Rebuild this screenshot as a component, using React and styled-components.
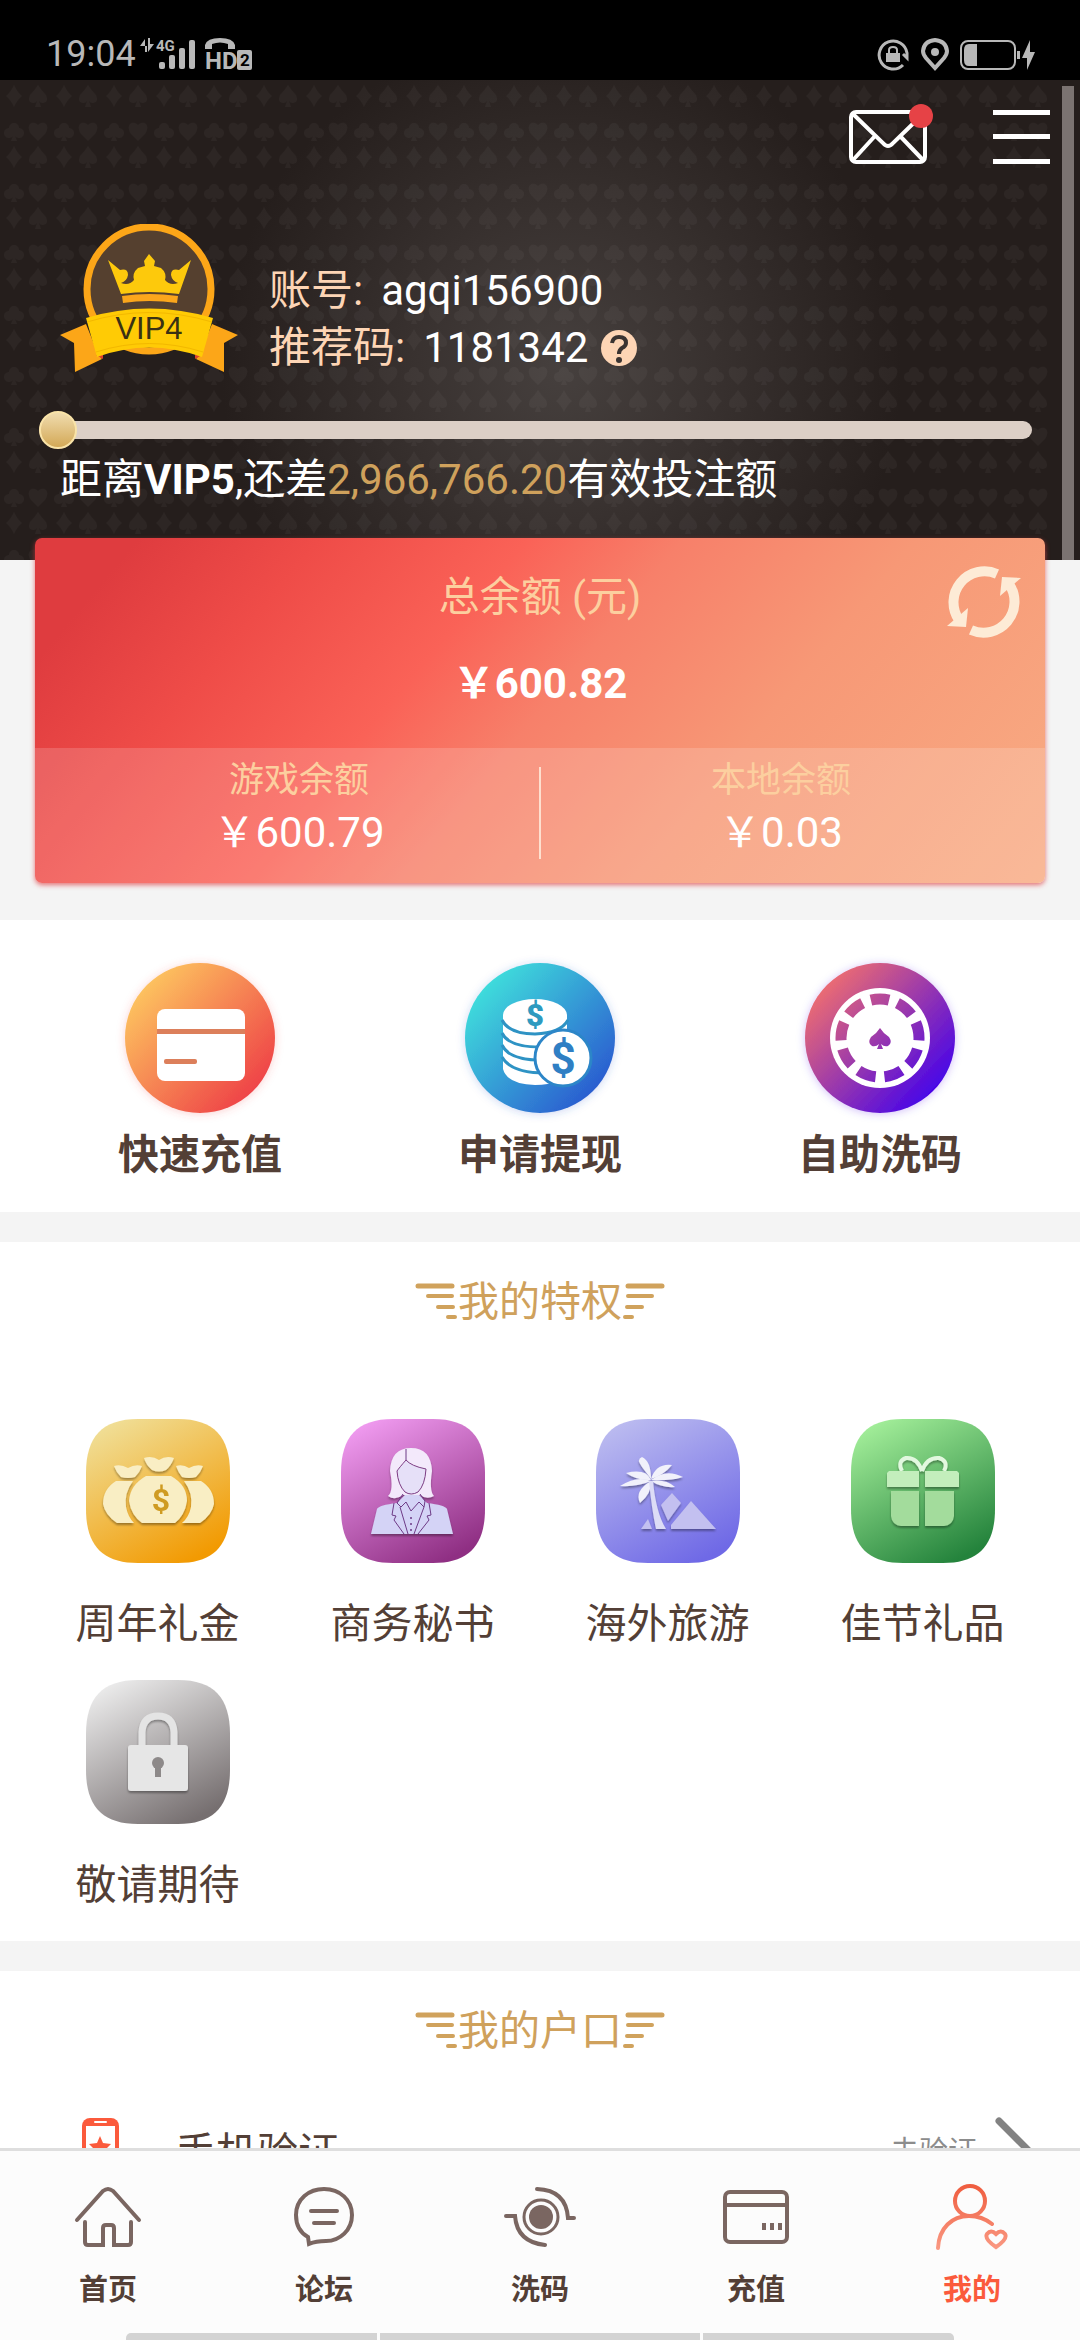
import React, { useState } from "react";
import styled, { createGlobalStyle, css } from "styled-components";

const GlobalStyle = createGlobalStyle`
  * {
    box-sizing: border-box;
  }
  body {
    margin: 0;
    background-color: #f4f4f4;
    color: #533f36;
    font-family: Roboto, "Noto Sans CJK SC", sans-serif;
  }
  button {
    padding: 0;
    border: none;
    background: none;
    color: inherit;
    font: inherit;
    cursor: pointer;
  }
  svg {
    display: block;
    flex: none;
  }
`;

const Screen = styled.div`
  display: flex;
  flex-direction: column;
  height: 100vh;
`;

/* ---------- status bar ---------- */

const StatusBar = styled.div`
  display: flex;
  flex: none;
  align-items: flex-end;
  justify-content: space-between;
  height: 80px;
  padding: 0 44px 8px 46px;
  background-color: #000;
  color: #b8b8b8;
`;

const StatusGroup = styled.div`
  display: flex;
  align-items: center;
  gap: ${(props) => props.$gap}px;
`;

const Clock = styled.span`
  font-size: 36px;
  line-height: 36px;
`;

/* ---------- header ---------- */

const Content = styled.main`
  flex: 1;
  min-height: 0;
  overflow-y: auto;
  scrollbar-width: none;
`;

const Header = styled.header`
  position: relative;
  padding: 0 30px 49px;
  background: radial-gradient(circle 340px at 52% 60%, #46403e, #38312f 45%, #251e1c);
  color: #fff;
`;

const Pattern = styled.svg`
  position: absolute;
  top: 0;
  left: 0;
  width: calc(100% - 32px);
  height: 100%;
`;

const ScrollThumb = styled.div`
  position: absolute;
  top: 6px;
  right: 6px;
  bottom: 0;
  width: 12px;
  background-color: #7b7371;
`;

const TopBar = styled.div`
  position: relative;
  display: flex;
  align-items: center;
  justify-content: flex-end;
  gap: 60px;
  height: 114px;
`;

const Profile = styled.div`
  position: relative;
  display: flex;
  align-items: flex-end;
  gap: 31px;
  margin: 30px 30px 0;
`;

const ProfileLine = styled.div`
  display: flex;
  align-items: center;
  font-size: 42px;
  line-height: 57px;
`;

const ProfileLabel = styled.span`
  margin-right: 18px;
  color: #fdd5b5;
`;

const HelpButton = styled.button`
  width: 36px;
  height: 36px;
  margin-left: 13px;
`;

const Progress = styled.div`
  position: relative;
  display: flex;
  align-items: center;
  height: 38px;
  margin: 35px 18px 0 9px;
`;

const ProgressTrack = styled.div`
  flex: 1;
  height: 18px;
  border-radius: 9px;
  background-color: #dccfc6;
`;

const ProgressKnob = styled.div`
  position: absolute;
  left: 0;
  width: 38px;
  height: 38px;
  border: 2px solid #f9e3a8;
  border-radius: 50%;
  background: linear-gradient(#f0dcae, #d3a957);
`;

const ProgressText = styled.p`
  position: relative;
  margin: 0 30px;
  font-size: 42px;
  line-height: 62px;
`;

const Amount = styled.span`
  color: #cfa15c;
`;

/* ---------- balance card ---------- */

const Card = styled.section`
  position: relative;
  overflow: hidden;
  margin: -22px 35px 37px;
  border-radius: 7px;
  background: linear-gradient(
    130deg,
    #df3c3f 8%,
    #ef4c48 22%,
    #fa6257 38%,
    #f7806a 50%,
    #f79876 68%,
    #f8ac84
  );
  box-shadow: 0 2px 5px rgba(221, 58, 62, 0.7);
  text-align: center;
`;

const CardTop = styled.div`
  display: flex;
  flex-direction: column;
  gap: 29px;
  padding: 30px 0 35px;
`;

const CardTitle = styled.h2`
  margin: 0;
  color: #fccf9f;
  font-size: 41px;
  font-weight: 400;
  line-height: 58px;
`;

const Total = styled.strong`
  color: #fff;
  font-size: 42px;
  line-height: 58px;
`;

const RefreshButton = styled.button`
  position: absolute;
  top: 27px;
  right: 24px;
`;

const CardBottom = styled.div`
  display: flex;
  align-items: flex-end;
  padding: 7px 24px 24px;
  background-color: rgba(255, 255, 255, 0.16);
`;

const Divider = styled.div`
  width: 2px;
  height: 92px;
  background-color: rgba(255, 240, 225, 0.8);
`;

const Balance = styled.div`
  flex: 1;
  color: #fff;
  font-size: 42px;
  line-height: 52px;
`;

const BalanceLabel = styled.div`
  color: #fccf9f;
  font-size: 35px;
`;

/* ---------- white panels ---------- */

const Panel = styled.section`
  margin-bottom: 30px;
  padding: ${(props) => props.$padding};
  background-color: #fff;
`;

const Grid = styled.div`
  display: grid;
  grid-template-columns: repeat(${(props) => props.$columns}, 1fr);
  row-gap: 25px;
`;

const Tile = styled.button`
  display: flex;
  flex-direction: column;
  align-items: center;
  gap: ${(props) => props.$gap}px;
  font-size: 41px;
  line-height: ${(props) => (props.$bold ? 50 : 61)}px;
  ${(props) =>
    props.$bold &&
    css`
      && {
        font-weight: 700;
      }
    `}
`;

const SectionTitle = styled.h2`
  display: flex;
  align-items: center;
  justify-content: center;
  gap: 1px;
  margin: 0 0 ${(props) => props.$space}px;
  color: #cfa15c;
  font-size: 41px;
  font-weight: 400;
  line-height: 60px;
`;

const AccountRow = styled.a`
  display: flex;
  align-items: center;
  height: 100px;
  padding: 0 18px 0 52px;
  color: inherit;
  font-size: 41px;
  text-decoration: none;
`;

const RowLabel = styled.span`
  flex: 1;
  margin-left: 56px;
`;

const RowHint = styled.span`
  margin-right: 18px;
  color: #8c8c8c;
  font-size: 29px;
`;

/* ---------- bottom navigation ---------- */

const NavBar = styled.nav`
  flex: none;
  border-top: 3px solid #dedede;
  background-color: #fcfcfc;
`;

const NavList = styled.div`
  display: grid;
  grid-template-columns: repeat(5, 1fr);
  height: 182px;
  padding-top: 33px;
`;

const NavItem = styled.a`
  display: flex;
  flex-direction: column;
  align-items: center;
  gap: 18px;
  color: ${(props) => (props.$active ? "#fb5a3c" : "#533f36")};
  font-size: 29px;
  font-weight: 700;
  line-height: 44px;
  text-decoration: none;
`;

const GestureBar = styled.div`
  display: flex;
  gap: 3px;
  height: 7px;
  margin: 0 126px;
  overflow: hidden;
  border-radius: 5px 5px 0 0;

  span {
    flex: 1;
    background-color: #d3d3d3;
  }
  span:nth-child(2) {
    flex: none;
    width: 320px;
  }
`;

/* ---------- drawings ---------- */

const SignalIcon = () => (
  <svg width="114" height="34" viewBox="0 0 114 34" fill="#b8b8b8" overflow="visible">
    <path d="M0 9 L5 2 V15 H7 V9 Z M8 1 V15 L14 7 H10 V1 Z" />
    <text x="16" y="14" fontSize="15" fontWeight="700">4G</text>
    <rect x="19" y="25" width="6" height="7" rx="2" />
    <rect x="29" y="18" width="6" height="14" rx="2" />
    <rect x="39" y="11" width="6" height="21" rx="2" />
    <rect x="49" y="3" width="6" height="29" rx="2" />
    <path d="M65 12 V8 Q67 1 80 1 Q93 1 95 8 V12 H88 V7 Q80 4 72 7 V12 Z" />
    <text x="65" y="32" fontSize="24" fontWeight="700">HD</text>
    <rect x="97" y="13" width="15" height="20" rx="2" />
    <text x="100" y="29" fontSize="17" fontWeight="700" fill="#000">2</text>
  </svg>
);

const LockRotateIcon = () => (
  <svg width="34" height="34" viewBox="0 0 34 34" fill="none" stroke="#b8b8b8">
    <path d="M27 27 A14 14 0 1 1 31 15 L31 20 L27 16" strokeWidth="3" />
    <rect x="10" y="15" width="14" height="9" fill="#b8b8b8" stroke="none" />
    <path d="M13 16 V12 Q13 9 17 9 Q21 9 21 12 V16" strokeWidth="2" />
  </svg>
);

const PinIcon = () => (
  <svg width="28" height="34" viewBox="0 0 28 34" fill="none" stroke="#b8b8b8">
    <path d="M14 30 L5 20 Q2 16 2 13 Q3 3 14 2 Q25 3 26 13 Q26 16 23 20 Z" strokeWidth="4" />
    <circle cx="14" cy="14" r="4" fill="#b8b8b8" stroke="none" />
  </svg>
);

const BatteryIcon = () => (
  <svg width="76" height="34" viewBox="0 0 76 34" fill="none">
    <rect x="1" y="3" width="54" height="28" rx="7" stroke="#b8b8b8" strokeWidth="2" />
    <path d="M17 6 V28 H9 Q4 28 4 22 V12 Q4 6 9 6 Z" fill="#b8b8b8" />
    <rect x="57" y="13" width="3" height="8" fill="#b8b8b8" />
    <path d="M70 2 L62 20 H67 V32 L75 14 H70 Z" fill="#b8b8b8" />
  </svg>
);

const SuitPattern = () => (
  <Pattern aria-hidden="true">
    <defs>
      <pattern id="suits" width="50" height="61" patternUnits="userSpaceOnUse">
        <g fill="#fff" opacity="0.035">
          <path d="M14 5 Q17 12 22 16 Q17 20 14 27 Q11 20 6 16 Q11 12 14 5 Z" />
          <path d="M38 5 Q41 10 46 15 Q49 22 43 23 Q40 23 39 21 L41 27 H35 L37 21 Q36 23 33 23 Q27 22 30 15 Q35 10 38 5 Z" />
          <path d="M11 61 L13 56 A5 5 0 1 1 9 48 A5 5 0 1 1 19 48 A5 5 0 1 1 15 56 L17 61 Z" />
          <path d="M38 45 Q42 41 46 44 Q49 48 45 54 L38 61 L31 54 Q27 48 30 44 Q34 41 38 45 Z" />
        </g>
      </pattern>
    </defs>
    <rect width="100%" height="100%" fill="url(#suits)" />
  </Pattern>
);

const MailIcon = () => (
  <svg width="84" height="68" viewBox="0 0 84 68" fill="none" stroke="#fff" strokeWidth="4">
    <rect x="2" y="9" width="74" height="50" rx="5" />
    <path d="M4 11 L34 40 Q39 46 44 40 L74 11 M4 57 L26 33 M74 57 L51 33" />
    <circle cx="72" cy="13" r="12" fill="#e64246" stroke="none" />
  </svg>
);

const MenuIcon = () => (
  <svg width="57" height="54" viewBox="0 0 57 54" fill="#fff">
    <rect y="0" width="57" height="5" />
    <rect y="24" width="57" height="5" />
    <rect y="49" width="57" height="5" />
  </svg>
);

const VipBadge = () => (
  <svg width="178" height="152" viewBox="0 0 178 152">
    <path d="M0 111 L26 100 L38 130 L42 135 L15 148 L14 119 Z" fill="#fca618" />
    <path d="M178 111 L152 100 L140 130 L136 135 L164 148 L164 119 Z" fill="#fca618" />
    <path d="M36 131 L43 131 L43 135 Z M142 131 L135 131 L135 135 Z" fill="#e0402a" />
    <circle cx="89" cy="65" r="62" fill="#55402f" stroke="#fca618" strokeWidth="7" />
    <path
      d="M48 36 L60 46 Q68 44 68 51 Q67 57 61 59 Q69 62 74 56 Q72 49 78 44 L85 42 L84 37 L89 30 L95 37 L94 42 L101 44 Q107 49 105 56 Q110 62 118 59 Q112 57 111 51 Q111 44 119 46 L131 36 L119 70 Q89 66 61 70 Z"
      fill="#fdc90c"
    />
    <path d="M62 72 Q89 68 118 72 L117 79 Q89 75 63 79 Z" fill="#fba61c" />
    <path d="M26 94 Q89 75 153 94 L142 133 Q89 114 37 133 Z" fill="#ffcb05" />
    <path d="M27 98 Q89 79 152 98 M36 128 Q89 111 143 128" fill="none" stroke="#f3b800" strokeWidth="1" />
    <text
      x="89"
      y="115"
      textAnchor="middle"
      fontFamily="Liberation Sans, sans-serif"
      fontSize="31"
      fill="#3a3113"
    >
      VIP4
    </text>
  </svg>
);

const HelpIcon = () => (
  <svg width="36" height="36" viewBox="0 0 36 36">
    <circle cx="18" cy="18" r="18" fill="#fdd5b5" />
    <path
      d="M11 13 Q12 7 18 7 Q25 7 25 13 Q25 16 21 18 Q18 20 18 24"
      fill="none"
      stroke="#3a3331"
      strokeWidth="4"
    />
    <circle cx="18" cy="30" r="3" fill="#3a3331" />
  </svg>
);

const RefreshIcon = () => (
  <svg width="74" height="74" viewBox="-1 -1 74 74">
    {[0, 180].map((angle) => (
      <g key={angle} transform={`rotate(${angle} 36 36)`}>
        <path d="M49 8 A31 31 0 0 0 11 54" fill="none" stroke="#fdebd6" strokeWidth="10" />
        <path d="M-1 60 L18 61 L20 42 Z" fill="#fdebd6" />
      </g>
    ))}
  </svg>
);

const RoundIcon = ({ id, colors, children }) => (
  <svg width="150" height="150" viewBox="0 0 150 150" overflow="visible">
    <defs>
      <linearGradient id={id} x1="10%" y1="15%" x2="85%" y2="85%">
        <stop offset="0" stopColor={colors[0]} />
        <stop offset="1" stopColor={colors[1]} />
      </linearGradient>
      <filter id={`${id}-glow`} x="-20%" y="-20%" width="140%" height="140%">
        <feDropShadow dx="0" dy="1" stdDeviation="4" floodColor={colors[1]} floodOpacity="0.25" />
      </filter>
    </defs>
    <circle cx="75" cy="75" r="75" fill={`url(#${id})`} filter={`url(#${id}-glow)`} />
    {children}
  </svg>
);

const DepositIcon = () => (
  <RoundIcon id="deposit" colors={["#fdc55f", "#ef4548"]}>
    <rect x="32" y="46" width="88" height="72" rx="8" fill="#fff" />
    <rect x="32" y="66" width="88" height="5" fill="#dc7f5b" />
    <rect x="39" y="96" width="33" height="5" rx="2" fill="#dc7f5b" />
  </RoundIcon>
);

const WithdrawIcon = () => (
  <RoundIcon id="withdraw" colors={["#3fdfdc", "#2b5fd0"]}>
    <path d="M38 52 H102 V106 Q98 122 70 122 Q42 121 38 106 Z" fill="#fff" />
    <path
      d="M37 57 Q44 71 70 71 Q96 70 103 57 M37 70 Q44 85 80 84 M37 82 Q44 97 76 97 M37 94 Q46 110 80 110"
      fill="none"
      stroke="#2e93c4"
      strokeWidth="3"
    />
    <ellipse cx="70" cy="52" rx="32" ry="16" fill="#fff" />
    <circle cx="98" cy="95" r="28" fill="#fff" stroke="#2c86c8" strokeWidth="3" />
    <text x="70" y="63" textAnchor="middle" fontSize="31" fontWeight="900" fill="#2e9abf">$</text>
    <text x="98" y="111" textAnchor="middle" fontSize="44" fontWeight="700" fill="#2f7fc4">$</text>
  </RoundIcon>
);

const ChipIcon = () => (
  <RoundIcon id="chip" colors={["#ef6e70", "#4a06e6"]}>
    <mask id="chip-mask">
      <circle cx="75" cy="75" r="50" fill="#fff" />
      <circle
        cx="75"
        cy="75"
        r="39"
        fill="none"
        stroke="#000"
        strokeWidth="11"
        pathLength="360"
        strokeDasharray="27 13"
        transform="rotate(-103.5 75 75)"
      />
      <path
        d="M75 65 Q78 70 84 74 Q88 80 83 83 Q79 84 76 81 L78 86 H72 L74 81 Q71 84 67 83 Q62 80 66 74 Q72 70 75 65 Z"
        fill="#000"
      />
    </mask>
    <rect x="25" y="25" width="100" height="100" fill="#fff" mask="url(#chip-mask)" />
  </RoundIcon>
);

const SquircleIcon = ({ id, colors, children }) => (
  <svg width="144" height="144" viewBox="0 0 144 144">
    <defs>
      <linearGradient id={id} x1="15%" y1="0" x2="70%" y2="100%">
        <stop offset="0" stopColor={colors[0]} />
        <stop offset="1" stopColor={colors[1]} />
      </linearGradient>
      <filter id={`${id}-shade`}>
        <feDropShadow dx="0" dy="2" stdDeviation="1" floodColor="#000" floodOpacity="0.35" />
      </filter>
    </defs>
    <path
      d="M52 0 H92 C128 0 144 18 144 54 V90 C144 126 128 144 92 144 H52 C16 144 0 126 0 90 V54 C0 18 16 0 52 0 Z"
      fill={`url(#${id})`}
    />
    <g filter={`url(#${id}-shade)`}>{children}</g>
  </svg>
);

const BonusIcon = () => (
  <SquircleIcon id="bonus" colors={["#f0e09a", "#f29a02"]}>
    <g fill="#f9eec4">
      <path d="M30 62 H47 Q38 74 40 88 Q42 98 48 104 H31 Q19 96 17 85 Q17 70 30 62 Z" />
      <path d="M115 62 H98 Q107 74 105 88 Q103 98 96 104 H114 Q126 96 128 85 Q128 70 115 62 Z" />
      <path d="M60 57 H85 Q101 66 101 82 Q99 96 89 104 H56 Q45 96 43 82 Q44 66 60 57 Z" />
      <path d="M28 47 Q35 45 42 49 Q49 45 56 47 Q54 53 49 58 Q42 60 35 58 Q30 53 28 47 Z" />
      <path d="M90 47 Q97 45 103 49 Q110 45 117 47 Q115 53 110 58 Q103 60 96 58 Q92 53 90 47 Z" />
      <path d="M58 39 Q66 36 73 41 Q80 36 88 39 Q85 47 80 51 Q73 54 66 51 Q60 46 58 39 Z" />
    </g>
    <text x="75" y="92" textAnchor="middle" fontSize="32" fontWeight="700" fill="#cf9b22">$</text>
  </SquircleIcon>
);

const SecretaryIcon = () => (
  <SquircleIcon id="secretary" colors={["#f29df2", "#8f2f83"]}>
    <path
      d="M47 77 Q53 72 49 52 Q50 29 70 29 Q90 29 91 52 Q88 72 93 77 Q86 81 79 76 H62 Q54 82 47 77 Z"
      fill="#f3e9fb"
    />
    <path d="M30 115 L36 90 Q38 86 56 84 L64 76 H78 L86 84 Q104 86 106 90 L112 115 Z" fill="#d4d3f6" />
    <path
      d="M65 41 Q58 49 56 52 Q57 66 64 73 Q70 77 77 73 Q84 66 85 50 Q70 47 65 41 Z"
      fill="#e6e0f8"
      stroke="#7c3c83"
      strokeWidth="1"
    />
    <path
      d="M65 30 V41 M62 75 L56 84 L60 88 L65 83 L70 92 L78 83 L83 88 L84 82 L79 75 M53 84 L51 96 L55 97 L53 101 L63 115 M59 88 L67 115 M88 84 L90 96 L86 97 L88 101 L77 115 M83 88 L73 115"
      fill="none"
      stroke="#6d3a86"
      strokeWidth="1"
    />
    <g fill="#6d3a86">
      <circle cx="70" cy="99" r="1" />
      <circle cx="70" cy="105" r="1" />
      <circle cx="70" cy="111" r="1" />
    </g>
  </SquircleIcon>
);

const TravelIcon = () => (
  <SquircleIcon id="travel" colors={["#bdbdf0", "#6f69e6"]}>
    <g fill="#f1f1fb">
      <path d="M55 62 Q41 56 24 67 Q42 68 55 62 Z" />
      <path d="M55 61 Q50 49 30 54 Q42 62 55 61 Z" />
      <path d="M55 60 Q55 42 46 38 Q40 40 46 48 Z" />
      <path d="M55 60 Q60 44 76 46 Q68 56 55 60 Z" />
      <path d="M55 61 Q70 49 87 58 Q74 62 55 61 Z" />
      <path d="M55 62 Q70 60 79 68 Q66 69 55 62 Z" />
      <path d="M55 62 Q56 74 44 84 Q38 72 55 62 Z" />
    </g>
    <path d="M53 62 Q56 92 60 110 H70 Q60 94 57 62 Z" fill="#dcdcf6" />
    <g fill="#c3c0f0">
      <path d="M76 74 L85 84 L72 102 L65 86 Z" />
      <path d="M95 82 L120 110 H75 V106 Z" />
      <path d="M52 100 L56 110 H45 Z" />
    </g>
  </SquircleIcon>
);

const GiftIcon = () => (
  <SquircleIcon id="gift" colors={["#a5f09b", "#24833c"]}>
    <path
      d="M71 52 Q66 38 55 39 Q46 42 51 52 M71 52 Q76 38 88 39 Q98 42 93 52"
      fill="none"
      stroke="#e2f8df"
      strokeWidth="4"
    />
    <g fill="#c3eebc">
      <path d="M38 52 H68 V68 H36 V54 Z" />
      <path d="M74 52 H106 L108 54 V68 H74 Z" />
    </g>
    <g fill="#a3dc9c">
      <path d="M40 72 H68 V107 H50 Q41 106 40 97 Z" />
      <path d="M74 72 H103 V97 Q102 106 93 107 H74 Z" />
    </g>
  </SquircleIcon>
);

const LockIcon = () => (
  <SquircleIcon id="lock" colors={["#eeeeee", "#766f70"]}>
    <path d="M56 66 V52 Q57 36 72 36 Q87 36 88 52 V66" fill="none" stroke="#e4e4e4" strokeWidth="7" />
    <rect x="42" y="65" width="60" height="46" rx="3" fill="#e6e6e6" />
    <path d="M69 87 H75 V97 H69 Z" fill="#8d8989" />
    <circle cx="72" cy="83" r="6" fill="#8d8989" />
  </SquircleIcon>
);

const Wing = ({ flip }) => (
  <svg
    width="42"
    height="38"
    viewBox="0 0 42 38"
    stroke="#d0a25c"
    strokeWidth="4"
    strokeLinecap="round"
    transform={flip ? "scale(-1 1)" : undefined}
  >
    <path d="M3 3 H37" strokeWidth="5" />
    <path d="M13 13 H37 M23 24 H38 M33 34 H40" />
  </svg>
);

const PhoneIcon = () => (
  <svg width="37" height="62" viewBox="0 0 37 62">
    <rect width="37" height="62" rx="8" fill="#fb5a3c" />
    <rect x="4" y="8" width="29" height="44" fill="#fff" />
    <rect x="12" y="3" width="13" height="2" rx="1" fill="#fff" />
    <path d="M18 18 L21 25 L29 26 L23 32 L25 40 L18 36 L11 40 L13 32 L7 26 L15 25 Z" fill="#fb5a3c" />
  </svg>
);

const Chevron = () => (
  <svg width="37" height="64" viewBox="0 0 37 64" fill="none" stroke="#828282" strokeWidth="7">
    <path d="M4 4 L32 32 L4 60" strokeLinecap="round" />
  </svg>
);

const NavSvg = styled.svg`
  width: 72px;
  height: 66px;
  fill: none;
  stroke: #7a6661;
  stroke-width: 4px;
  stroke-linecap: round;
`;

const HomeIcon = () => (
  <NavSvg viewBox="0 0 72 66">
    <path d="M5 36 L31 7 Q36 3 41 7 L67 36" />
    <path d="M13 38 V58 Q13 61 16 61 H31 V44 Q31 41 34 41 H39 Q42 41 42 44 V61 H56 Q59 61 59 58 V38" />
  </NavSvg>
);

const ForumIcon = () => (
  <NavSvg viewBox="0 0 72 66">
    <path d="M20 53 C11 48 8 39 8 31 C8 15 21 5 36 5 C52 5 64 16 64 31 C64 46 52 57 38 57 C32 57 28 57 21 60 Z" />
    <path d="M23 27 H49 M26 39 H46" />
  </NavSvg>
);

const WashIcon = () => (
  <NavSvg viewBox="0 0 72 66">
    <circle cx="37" cy="33" r="12" fill="#7a6661" stroke="none" />
    <circle cx="37" cy="33" r="17" strokeWidth="3" />
    <path d="M2 32 H11 Q13 58 41 61 M33 5 Q62 6 64 34 H70" />
  </NavSvg>
);

const CardIcon = () => (
  <NavSvg viewBox="0 0 72 66">
    <rect x="5" y="8" width="62" height="50" rx="5" />
    <path d="M5 21 H67" />
    <path d="M44 39 V46 M52 39 V46 M60 39 V46" strokeLinecap="butt" />
  </NavSvg>
);

const MineIcon = () => (
  <NavSvg viewBox="0 0 72 66">
    <defs>
      <linearGradient id="mine" gradientUnits="userSpaceOnUse" x1="0" y1="0" x2="0" y2="66">
        <stop offset="0" stopColor="#ef5c3e" />
        <stop offset="1" stopColor="#fa9a84" />
      </linearGradient>
    </defs>
    <g stroke="url(#mine)">
      <circle cx="34" cy="17" r="15" />
      <path d="M2 64 C3 44 16 32 33 32 Q46 32 56 40" />
      <path d="M60 50 Q55 45 51 50 Q48 55 60 63 Q72 55 69 50 Q65 45 60 50 Z" />
    </g>
  </NavSvg>
);

const quickActions = [
  { label: "快速充值", Icon: DepositIcon },
  { label: "申请提现", Icon: WithdrawIcon },
  { label: "自助洗码", Icon: ChipIcon },
];

const privileges = [
  { label: "周年礼金", Icon: BonusIcon },
  { label: "商务秘书", Icon: SecretaryIcon },
  { label: "海外旅游", Icon: TravelIcon },
  { label: "佳节礼品", Icon: GiftIcon },
  { label: "敬请期待", Icon: LockIcon },
];

const navItems = [
  { label: "首页", Icon: HomeIcon },
  { label: "论坛", Icon: ForumIcon },
  { label: "洗码", Icon: WashIcon },
  { label: "充值", Icon: CardIcon },
  { label: "我的", Icon: MineIcon },
];

const App = () => {
  const [activeTab, setActiveTab] = useState("我的");

  return (
    <Screen>
      <GlobalStyle />
      <StatusBar>
        <StatusGroup $gap={4}>
          <Clock>19:04</Clock>
          <SignalIcon />
        </StatusGroup>
        <StatusGroup $gap={11}>
          <LockRotateIcon />
          <PinIcon />
          <BatteryIcon />
        </StatusGroup>
      </StatusBar>

      <Content>
        <Header>
          <SuitPattern />
          <ScrollThumb />
          <TopBar>
            <button type="button" aria-label="消息">
              <MailIcon />
            </button>
            <button type="button" aria-label="菜单">
              <MenuIcon />
            </button>
          </TopBar>
          <Profile>
            <VipBadge />
            <div>
              <ProfileLine>
                <ProfileLabel>账号:</ProfileLabel>
                agqi156900
              </ProfileLine>
              <ProfileLine>
                <ProfileLabel>推荐码:</ProfileLabel>
                1181342
                <HelpButton type="button" aria-label="帮助">
                  <HelpIcon />
                </HelpButton>
              </ProfileLine>
            </div>
          </Profile>
          <Progress role="progressbar" aria-valuenow={0} aria-label="VIP5">
            <ProgressTrack />
            <ProgressKnob />
          </Progress>
          <ProgressText>
            距离<b>VIP5</b>,还差<Amount>2,966,766.20</Amount>有效投注额
          </ProgressText>
        </Header>

        <Card>
          <CardTop>
            <CardTitle>总余额 (元)</CardTitle>
            <Total>￥600.82</Total>
          </CardTop>
          <RefreshButton type="button" aria-label="刷新">
            <RefreshIcon />
          </RefreshButton>
          <CardBottom>
            <Balance>
              <BalanceLabel>游戏余额</BalanceLabel>
              ￥600.79
            </Balance>
            <Divider />
            <Balance>
              <BalanceLabel>本地余额</BalanceLabel>
              ￥0.03
            </Balance>
          </CardBottom>
        </Card>

        <Panel $padding="43px 30px 32px">
          <Grid $columns={3}>
            {quickActions.map(({ label, Icon }) => (
              <Tile key={label} type="button" $gap={17} $bold>
                <Icon />
                {label}
              </Tile>
            ))}
          </Grid>
        </Panel>

        <Panel $padding="30px 30px 25px">
          <SectionTitle $space={87}>
            <Wing />
            我的特权
            <Wing flip />
          </SectionTitle>
          <Grid $columns={4}>
            {privileges.map(({ label, Icon }) => (
              <Tile key={label} type="button" $gap={31}>
                <Icon />
                {label}
              </Tile>
            ))}
          </Grid>
        </Panel>

        <Panel $padding="30px 30px 0">
          <SectionTitle $space={38}>
            <Wing />
            我的户口
            <Wing flip />
          </SectionTitle>
          <AccountRow href="#phone">
            <PhoneIcon />
            <RowLabel>手机验证</RowLabel>
            <RowHint>去验证</RowHint>
            <Chevron />
          </AccountRow>
        </Panel>
      </Content>

      <NavBar>
        <NavList>
          {navItems.map(({ label, Icon }) => (
            <NavItem
              key={label}
              href={`#${label}`}
              $active={activeTab === label}
              onClick={() => setActiveTab(label)}
            >
              <Icon />
              {label}
            </NavItem>
          ))}
        </NavList>
        <GestureBar>
          <span />
          <span />
          <span />
        </GestureBar>
      </NavBar>
    </Screen>
  );
};

export default App;
